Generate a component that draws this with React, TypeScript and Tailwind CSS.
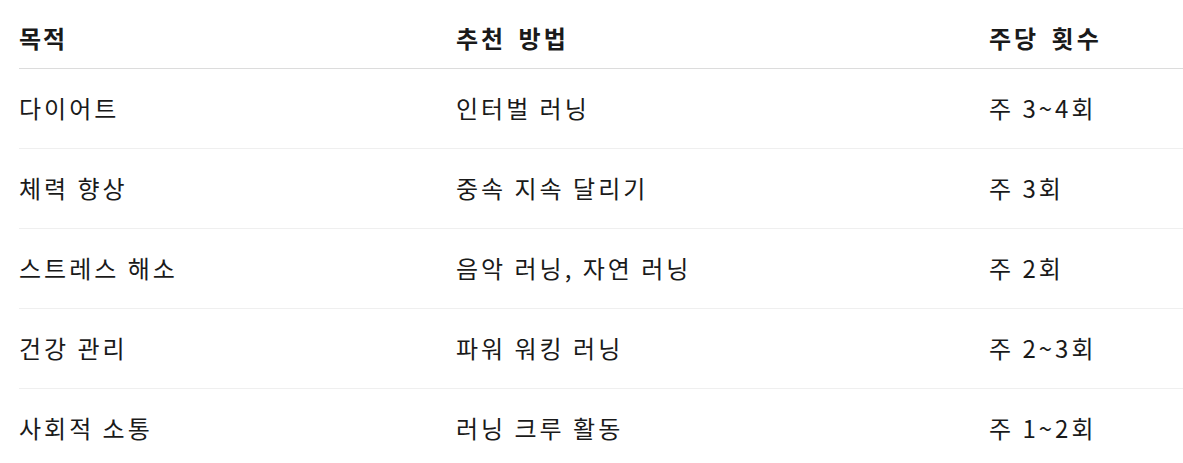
const rows = [
  ["다이어트", "인터벌 러닝", "주 3~4회"],
  ["체력 향상", "중속 지속 달리기", "주 3회"],
  ["스트레스 해소", "음악 러닝, 자연 러닝", "주 2회"],
  ["건강 관리", "파워 워킹 러닝", "주 2~3회"],
  ["사회적 소통", "러닝 크루 활동", "주 1~2회"],
];

export default function App() {
  return (
    <div className="h-[463px] w-[1183px] bg-white pl-[19px] text-[#1a1a1a] [font-family:'Noto_Sans_CJK_KR','Noto_Sans',sans-serif]">
      <table className="w-full border-collapse text-left">
        <thead>
          <tr className="border-b border-[#dcdcdc]">
            <th className="h-[68px] w-[437px] pt-[8px] align-middle text-[24px] font-bold tracking-[2px]">목적</th>
            <th className="w-[533px] pt-[8px] align-middle text-[24px] font-bold tracking-[3px] [word-spacing:4px]">추천 방법</th>
            <th className="pt-[8px] align-middle text-[24px] font-bold tracking-[3px] [word-spacing:4px]">주당 횟수</th>
          </tr>
        </thead>
        <tbody>
          {rows.map((r, i) => (
            <tr key={i} className="border-b border-[#efefef] last:border-b-0">
              {r.map((c, j) => (
                <td key={j} className="h-[80px] align-middle text-[24px] font-normal tracking-[3px]">
                  {c}
                </td>
              ))}
            </tr>
          ))}
        </tbody>
      </table>
    </div>
  );
}
